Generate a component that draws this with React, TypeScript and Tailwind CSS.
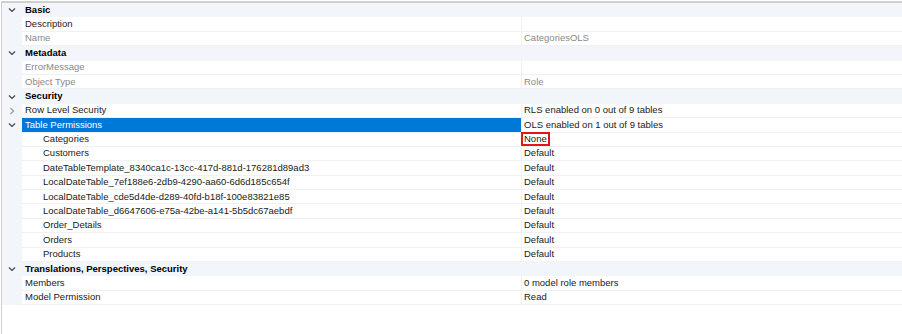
type Row =
  | { kind: "cat"; label: string }
  | {
      kind: "prop";
      label: string;
      value?: string;
      muted?: boolean;
      indent?: boolean;
      chevron?: "open" | "closed";
      selected?: boolean;
      boxed?: boolean;
    };

const rows: Row[] = [
  { kind: "cat", label: "Basic" },
  { kind: "prop", label: "Description" },
  { kind: "prop", label: "Name", value: "CategoriesOLS", muted: true },
  { kind: "cat", label: "Metadata" },
  { kind: "prop", label: "ErrorMessage", muted: true },
  { kind: "prop", label: "Object Type", value: "Role", muted: true },
  { kind: "cat", label: "Security" },
  { kind: "prop", label: "Row Level Security", value: "RLS enabled on 0 out of 9 tables", chevron: "closed" },
  { kind: "prop", label: "Table Permissions", value: "OLS enabled on 1 out of 9 tables", chevron: "open", selected: true },
  { kind: "prop", label: "Categories", value: "None", indent: true, boxed: true },
  { kind: "prop", label: "Customers", value: "Default", indent: true },
  { kind: "prop", label: "DateTableTemplate_8340ca1c-13cc-417d-881d-176281d89ad3", value: "Default", indent: true },
  { kind: "prop", label: "LocalDateTable_7ef188e6-2db9-4290-aa60-6d6d185c654f", value: "Default", indent: true },
  { kind: "prop", label: "LocalDateTable_cde5d4de-d289-40fd-b18f-100e83821e85", value: "Default", indent: true },
  { kind: "prop", label: "LocalDateTable_d6647606-e75a-42be-a141-5b5dc67aebdf", value: "Default", indent: true },
  { kind: "prop", label: "Order_Details", value: "Default", indent: true },
  { kind: "prop", label: "Orders", value: "Default", indent: true },
  { kind: "prop", label: "Products", value: "Default", indent: true },
  { kind: "cat", label: "Translations, Perspectives, Security" },
  { kind: "prop", label: "Members", value: "0 model role members" },
  { kind: "prop", label: "Model Permission", value: "Read" },
];

function Chevron({ open, light }: { open: boolean; light?: boolean }) {
  return (
    <svg width="8" height="8" viewBox="0 0 8 8" className="block">
      <path
        d={open ? "M1 2.5 L4 5.5 L7 2.5" : "M2.5 1 L5.5 4 L2.5 7"}
        fill="none"
        stroke={light ? "#9a9a9a" : "#444"}
        strokeWidth="1.2"
      />
    </svg>
  );
}

export default function App() {
  return (
    <div
      className="w-[902px] h-[334px] bg-white pt-px pl-px overflow-hidden text-[9.5px] text-[#1a1a1a]"
      style={{ fontFamily: '"Liberation Sans", Arial, sans-serif' }}
    >
      <div className="h-full border-t-2 border-l border-[#cfcfcf]">
        {rows.map((r, i) =>
          r.kind === "cat" ? (
            <div key={i} className="flex h-[14.4px] items-center bg-[#f2f5fa]">
              <div className="w-[20px] flex justify-center">
                <Chevron open />
              </div>
              <div className="pl-[3px] font-bold text-black">{r.label}</div>
            </div>
          ) : (
            <div key={i} className="flex h-[14.4px]">
              <div className="w-[20px] flex justify-center items-center bg-[#f2f5fa]">
                {r.chevron && <Chevron open={r.chevron === "open"} light={r.chevron === "closed"} />}
              </div>
              <div
                className={`w-[499px] flex items-center border-b border-[#f0f1f3] whitespace-nowrap ${
                  r.indent ? "pl-[21px]" : "pl-[3px]"
                } ${r.selected ? "bg-[#0078d7] text-white" : r.muted ? "text-[#8a8a8a]" : ""}`}
              >
                {r.label}
              </div>
              <div
                className={`flex-1 flex items-center border-b border-l border-[#f0f1f3] pl-[2px] whitespace-nowrap ${
                  r.muted ? "text-[#8a8a8a]" : ""
                }`}
              >
                {r.boxed ? (
                  <span className="border-2 border-[#e0161b] px-px leading-[10px] -ml-[3px]">{r.value}</span>
                ) : (
                  r.value
                )}
              </div>
            </div>
          )
        )}
      </div>
    </div>
  );
}
